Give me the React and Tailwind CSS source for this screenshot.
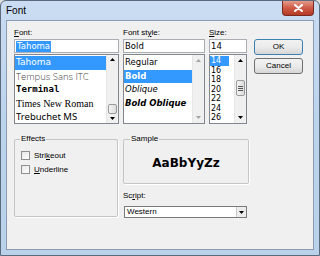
import React from "react";

const ui = { fontFamily: '"Liberation Sans", Arial, sans-serif' };
const tahoma = { fontFamily: '"DejaVu Sans", sans-serif' };

function Arrow({ dir = "down", color = "#000" }) {
  return (
    <svg width="5" height="3" viewBox="0 0 5 3">
      {dir === "down" ? (
        <path d="M0 0 H5 L2.5 3 Z" fill={color} />
      ) : (
        <path d="M0 3 H5 L2.5 0 Z" fill={color} />
      )}
    </svg>
  );
}

function ScrollBar({ thumbTop, thumbH, grip, disabled }) {
  const c = disabled ? "#a3a3a3" : "#000";
  return (
    <div className="w-[12px] h-full flex flex-col bg-[#f0f0f0] border-l border-[#e6e6e6]">
      <div className="h-[11px] flex items-center justify-center">
        <Arrow dir="up" color={c} />
      </div>
      <div className="flex-1 flex flex-col">
        {thumbH ? (
          <div
            className="mx-[1px] rounded-[2px] border border-[#9a9a9a] bg-gradient-to-r from-[#f4f4f4] to-[#dcdcdc] flex flex-col items-center justify-center gap-[1px]"
            style={{ marginTop: thumbTop, height: thumbH }}
          >
            {grip && (
              <>
                <div className="w-[5px] h-px bg-[#555]" />
                <div className="w-[5px] h-px bg-[#555]" />
                <div className="w-[5px] h-px bg-[#555]" />
              </>
            )}
          </div>
        ) : null}
      </div>
      <div className="h-[11px] flex items-center justify-center">
        <Arrow dir="down" color={c} />
      </div>
    </div>
  );
}

function Label({ children }) {
  return <div className="h-[12px] leading-[12px] text-[8px] text-black">{children}</div>;
}

function TextBox({ children }) {
  return (
    <div className="h-[14px] border border-[#abadb3] bg-white flex items-center px-[1px] text-[8.5px]" style={tahoma}>
      {children}
    </div>
  );
}

function Button({ children, def }) {
  return (
    <div
      className={`h-[16px] w-[49px] rounded-[3px] border ${
        def ? "border-[#3c7fb1]" : "border-[#707070]"
      } bg-gradient-to-b from-[#f2f2f2] via-[#ebebeb] to-[#d6d6d6] flex items-center justify-center text-[8px] text-black`}
    >
      {children}
    </div>
  );
}

export default function App() {
  return (
    <div className="w-[320px] h-[256px] bg-[#e0e0e0] overflow-hidden" style={ui}>
      <div className="w-[320px] h-[256px] rounded-t-[6px] border border-[#5b6a7d] bg-gradient-to-b from-[#c9dcf2] via-[#bcd3ed] to-[#b9d1ea] flex flex-col">
        <div className="h-[19px] flex items-start justify-between">
          <span className="ml-[5px] mt-[4px] text-[10px] leading-[11px] text-black">Font</span>
          <div className="mr-[5px] w-[32px] h-[15px] rounded-b-[4px] border border-t-0 border-[#7b2a22] bg-gradient-to-b from-[#e39b8b] via-[#cd5a45] to-[#b53a25] flex items-center justify-center">
            <svg width="9" height="8" viewBox="0 0 9 8">
              <path d="M1 1 L8 7 M8 1 L1 7" stroke="#fff" strokeWidth="2" strokeLinecap="round" />
            </svg>
          </div>
        </div>

        <div className="mx-[5px] h-[230px] border border-[#8a9cb1] bg-[#f0f0f0] pt-[6px] pl-[7px] flex flex-col">
          {/* top row */}
          <div className="flex">
            <div className="w-[105px] flex flex-col">
              <Label>
                <span className="underline">F</span>ont:
              </Label>
              <TextBox>
                <span className="bg-[#3399ff] text-white px-[1px] leading-[11px]">Tahoma</span>
              </TextBox>
              <div className="mt-[1px] h-[70px] border border-[#828790] bg-white flex">
                <div className="flex-1 flex flex-col pt-[1px] overflow-hidden">
                  <div className="h-[13.5px] bg-[#3399ff] text-white text-[9px] leading-[13.5px] pl-[1px]" style={tahoma}>
                    Tahoma
                  </div>
                  <div
                    className="h-[13.5px] text-[9.5px] leading-[13.5px] pl-[1px] text-[#444] font-light"
                    style={{ fontFamily: '"Open Sans", sans-serif' }}
                  >
                    Tempus Sans ITC
                  </div>
                  <div
                    className="h-[13.5px] text-[9px] leading-[13.5px] pl-[1px] font-bold text-black"
                    style={{ fontFamily: '"DejaVu Sans Mono", monospace' }}
                  >
                    Terminal
                  </div>
                  <div
                    className="h-[13.5px] text-[10px] leading-[13.5px] pl-[1px] text-black"
                    style={{ fontFamily: '"Liberation Serif", serif' }}
                  >
                    Times New Roman
                  </div>
                  <div
                    className="h-[13.5px] text-[9.5px] leading-[13.5px] pl-[1px] text-black"
                    style={{ fontFamily: '"Noto Sans", sans-serif' }}
                  >
                    Trebuchet MS
                  </div>
                </div>
                <ScrollBar thumbTop={40} thumbH={10} />
              </div>
            </div>

            <div className="ml-[4px] w-[82px] flex flex-col">
              <Label>
                Font st<span className="underline">y</span>le:
              </Label>
              <TextBox>Bold</TextBox>
              <div className="mt-[1px] h-[70px] border border-[#828790] bg-white flex">
                <div className="flex-1 flex flex-col pt-[1px] overflow-hidden text-[8.5px] text-black" style={tahoma}>
                  <div className="h-[13.5px] leading-[13.5px] pl-[1px]">Regular</div>
                  <div className="h-[13.5px] leading-[13.5px] pl-[1px] bg-[#3399ff] text-white font-bold">Bold</div>
                  <div className="h-[13.5px] leading-[13.5px] pl-[1px] italic">Oblique</div>
                  <div className="h-[13.5px] leading-[13.5px] pl-[1px] italic font-bold">Bold Oblique</div>
                </div>
                <ScrollBar disabled />
              </div>
            </div>

            <div className="ml-[4px] w-[38px] flex flex-col">
              <Label>
                <span className="underline">S</span>ize:
              </Label>
              <TextBox>14</TextBox>
              <div className="mt-[1px] h-[70px] border border-[#828790] bg-white flex">
                <div className="flex-1 flex flex-col pt-[1px] overflow-hidden text-[8px] text-black" style={tahoma}>
                  {["14", "16", "18", "20", "22", "24", "26"].map((s, i) => (
                    <div key={s} className="h-[9.5px] leading-[9.5px]">
                      <span className={i === 0 ? "bg-[#3399ff] text-white pl-[1px] pr-[8px] inline-block" : "pl-[1px]"}>{s}</span>
                    </div>
                  ))}
                </div>
                <ScrollBar thumbTop={14} thumbH={16} grip />
              </div>
            </div>

            <div className="ml-[7px] flex flex-col pt-[12px] gap-[3px]">
              <Button def>OK</Button>
              <Button>Cancel</Button>
            </div>
          </div>

          {/* bottom row */}
          <div className="flex mt-[15px]">
            <div className="relative w-[104px] h-[78px] rounded-[2px] border border-[#c5c5c5] shadow-[1px_1px_0_#ffffff]">
              <span className="absolute -top-[6px] left-[5px] bg-[#f0f0f0] px-[1px] text-[8px] leading-[10px] text-black">
                Effects
              </span>
              <div className="pl-[6px] pt-[11px] flex flex-col gap-[4px] text-[8px] text-black">
                <div className="flex items-center gap-[4px] h-[9px]">
                  <div className="w-[9px] h-[9px] border border-[#8f8f8f] bg-gradient-to-br from-[#e6e6e6] to-white" />
                  <span>
                    Stri<span className="underline">k</span>eout
                  </span>
                </div>
                <div className="flex items-center gap-[4px] h-[9px] mt-[1px]">
                  <div className="w-[9px] h-[9px] border border-[#8f8f8f] bg-gradient-to-br from-[#e6e6e6] to-white" />
                  <span>
                    <span className="underline">U</span>nderline
                  </span>
                </div>
              </div>
            </div>

            <div className="ml-[5px] w-[126px] flex flex-col">
              <div className="relative h-[45px] rounded-[2px] border border-[#c5c5c5] shadow-[1px_1px_0_#ffffff] flex items-center justify-center">
                <span className="absolute -top-[6px] left-[6px] bg-[#f0f0f0] px-[1px] text-[8px] leading-[10px] text-black">
                  Sample
                </span>
                <span className="text-[12px] font-bold text-black mt-[2px]" style={tahoma}>
                  AaBbYyZz
                </span>
              </div>
              <div className="mt-[6px]">
                <Label>
                  Sc<span className="underline">r</span>ipt:
                </Label>
              </div>
              <div className="mt-[4px] ml-[1px] w-[123px] h-[12px] border border-[#7a7a7a] bg-white flex items-center">
                <span className="flex-1 pl-[2px] text-[8px] leading-[10px] text-black">Western</span>
                <div className="w-[10px] h-[10px] border-l border-[#c8c8c8] bg-[#ececec] flex items-center justify-center">
                  <Arrow />
                </div>
              </div>
            </div>
          </div>
        </div>
      </div>
    </div>
  );
}
